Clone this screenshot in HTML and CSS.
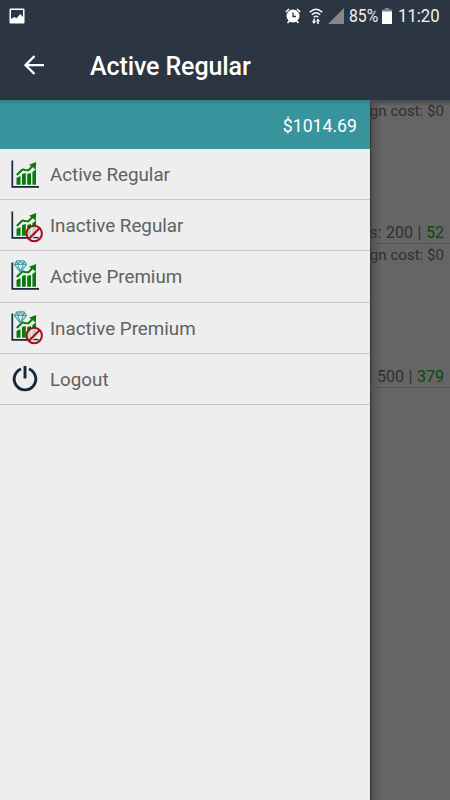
FILE: index.html
```html
<!DOCTYPE html>
<html lang="en">
<head>
<meta charset="utf-8">
<title>Active Regular</title>
<link rel="stylesheet" href="styles.css">
</head>
<body>
<svg width="0" height="0" class="defs">
  <defs>
    <g id="chart">
      <path d="M2.3 2.5V28.8H29" fill="none" stroke="#16283a" stroke-width="1.7"/>
      <path d="M6.5 20 10.5 18V26.8H6.5zM12 16 15.8 15V26.8H12zM17.2 16 21 15V26.8H17.2zM22.4 14 26 11.5V26.8H22.4z" fill="#087b0b"/>
      <path d="M6.8 17 11.3 12.5Q13 11 14.5 12L18.5 12.2 23 7.5" fill="none" stroke="#087b0b" stroke-width="2"/>
      <path d="M19 6.8 26.2 4 25.7 12 23.5 9.8 21.5 8.3z" fill="#087b0b"/>
    </g>
    <g id="banned">
      <circle cx="24.2" cy="24.5" r="7.7" fill="#efeded" fill-opacity=".8" stroke="#a30d18" stroke-width="2"/>
      <path d="M23.5 28.5h5" stroke="#16283a" stroke-width="1.3"/>
      <path d="M18.9 29.8 29.5 19.2" stroke="#a30d18" stroke-width="2"/>
    </g>
    <g id="gem" fill="none" stroke="#43a3ae" stroke-width="1.1">
      <path d="M7 .8h7L16.5 4.4 10.4 12 4.3 4.4zM4.3 4.4H16.5M7 .8 7.7 4.4 10.4 12 13.2 4.4 14 .8M7.7 4.4 10.4 .8 13.2 4.4"/>
    </g>
  </defs>
</svg>
<div class="screen">
  <header>
    <div class="status">
      <svg class="picture" width="16" height="16" viewBox="0 0 16 16"><path fill="#fff" fill-rule="evenodd" d="M1.5.5h13a1 1 0 0 1 1 1v13a1 1 0 0 1-1 1h-13a1 1 0 0 1-1-1v-13a1 1 0 0 1 1-1zM2 2v9l3.2-2 2.3 1.2L11.3 6 14 9V2z"/></svg>
      <svg class="alarm" width="16" height="16" viewBox="0 0 16 16"><circle cx="8" cy="8" r="6.5" fill="#fff"/><path d="M.8 4 4 1M12 1l3.2 3M2.5 15l2-2M13.5 15l-2-2" stroke="#fff" stroke-width="1.6"/><path d="M8 4.5V8.5H11" fill="none" stroke="#2b3642" stroke-width="1.3"/></svg>
      <svg class="wifi" width="14" height="16" viewBox="0 0 14 16"><path d="M.8 4.2Q7-1.8 13.2 4.2M2.8 6.8Q7 2.8 11.2 6.8M4.8 9.2Q7 7 9.2 9.2" fill="none" stroke="#fff" stroke-width="1.4"/><path d="M4.3 10.5h1.5v2.8h1.5L5 16 2.8 13.3h1.5zM8.2 16h1.5v-2.8h1.5L9 10.5 6.8 13.2h1.4z" fill="#fff"/></svg>
      <svg class="signal" width="16" height="16" viewBox="0 0 16 16"><path d="M16 0V16H0z" fill="#82888e"/></svg>
      <span class="percent">85%</span>
      <svg class="battery" width="10" height="16" viewBox="0 0 10 16"><path d="M3 0h4v1.5h3V4H0V1.5h3z" fill="#7f868c"/><path d="M0 3.5h10V16H0z" fill="#fff"/></svg>
      <span class="clock">11:20</span>
    </div>
    <div class="toolbar">
      <svg width="22" height="20" viewBox="0 0 22 20"><path d="M10.5 1 1.5 10.1 10.5 19M1.9 10.1H20" fill="none" stroke="#fff" stroke-width="2.3"/></svg>
      <h1>Active Regular</h1>
    </div>
  </header>
  <div class="body">
    <nav>
      <div class="balance">$1014.69</div>
      <a class="item"><svg width="36" height="34" viewBox="0 0 36 34"><use href="#chart"/></svg>Active Regular</a>
      <a class="item"><svg width="36" height="34" viewBox="0 0 36 34"><use href="#chart"/><use href="#banned"/></svg>Inactive Regular</a>
      <a class="item"><svg width="36" height="34" viewBox="0 0 36 34"><use href="#chart"/><use href="#gem"/></svg>Active Premium</a>
      <a class="item"><svg width="36" height="34" viewBox="0 0 36 34"><use href="#chart"/><use href="#gem"/><use href="#banned"/></svg>Inactive Premium</a>
      <a class="item"><svg width="36" height="34" viewBox="0 0 36 34"><path d="M11 7A10.8 10.8 0 1 0 19 7M15 4V16.5" fill="none" stroke="#14273b" stroke-width="2.9"/></svg>Logout</a>
    </nav>
    <main>
      <section><p class="cost">gn cost: $0</p><p class="count">s: 200 | <b>52</b></p></section>
      <section><p class="cost">gn cost: $0</p><p class="count">: 500 | <b>379</b></p></section>
    </main>
  </div>
</div>
</body>
</html>
```
FILE: styles.css
```css
* { box-sizing: border-box; }
body { margin: 0; font-family: Roboto, sans-serif; }
.defs { display: block; }
.screen { width: 450px; height: 800px; overflow: hidden; display: flex; flex-direction: column; }
header { height: 100px; flex: none; background: #2b3642; color: #fff; }
.status { height: 31px; display: flex; align-items: center; padding: 0 11px 0 9px; font-size: 19px; }
.status svg { flex: none; }
.status span { white-space: nowrap; flex: none; transform-origin: left center; color: #eef0f1; }
.picture { margin-right: 260px; }
.alarm { margin-right: 8px; }
.wifi { margin-right: 5px; }
.signal { margin-right: 5px; }
.percent { width: 33px; transform: scaleX(.83); }
.clock { margin-left: 6px; transform: scaleX(.88); }
.toolbar { height: 69px; display: flex; align-items: center; padding-left: 24px; }
.toolbar svg { margin-right: 44px; margin-top: -2px; }
h1 { margin: 0; padding-top: 1px; font-size: 25px; font-weight: 500; letter-spacing: -.1px; }
.body { flex: 1; display: grid; grid-template-columns: 370px 80px; }
nav { background: #eee; }
.balance { height: 49px; display: flex; align-items: center; justify-content: flex-end; padding: 2px 13px 0 0; background: linear-gradient(#2f7f86, #38949c 5px); color: #fff; font-size: 17.7px; }
.item { height: 51.2px; display: flex; align-items: center; border-bottom: 1px solid #c9c9c9; padding: 2px 0 0 10px; color: #616161; font-size: 18.8px; }
.item svg { margin-top: -1px; margin-right: 4px; flex: none; }
main { overflow: hidden; background: linear-gradient(#484848, transparent 6px), linear-gradient(90deg, #303030, #545454 2px, #656565 12px); color: #303030; }
section { height: 144px; display: flex; flex-direction: column; align-items: flex-end; justify-content: space-between; border-bottom: 1px solid #535353; }
p { margin: 0; line-height: 22px; white-space: nowrap; }
.cost { padding-right: 6px; font-size: 15.1px; }
.count { padding-right: 6px; line-height: 20px; font-size: 16px; word-spacing: .6px; }
b { font-weight: 400; color: #064b06; }
```
